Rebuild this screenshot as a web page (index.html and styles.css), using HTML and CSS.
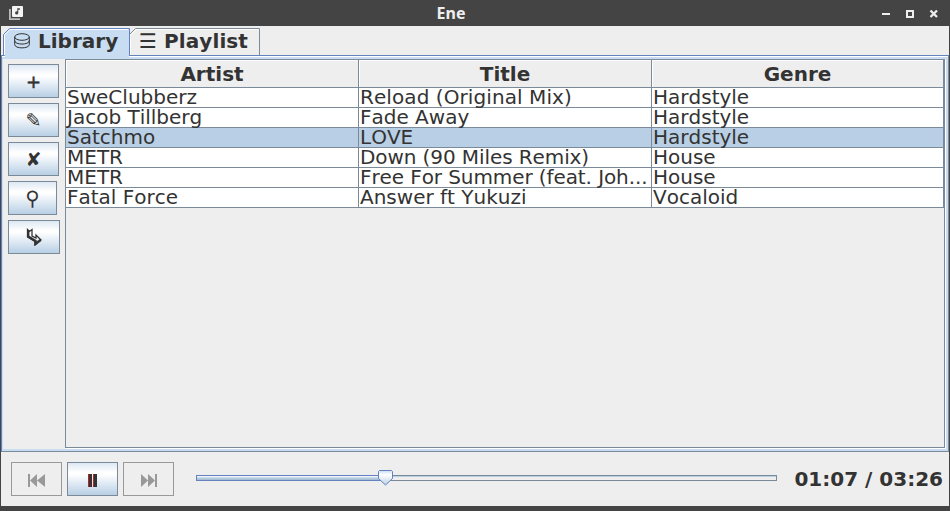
FILE: index.html
```html
<!DOCTYPE html>
<html lang="en">
<head>
<meta charset="utf-8">
<title>Ene</title>
<link rel="stylesheet" href="styles.css">
</head>
<body>
<div class="window">
  <header class="titlebar">
    <svg class="app-icon" width="14" height="14" viewBox="0 0 14 14"><path d="M0 3h1.800v9.200H11V14H0z" fill="#bbb"/><rect x="3" width="11" height="11" rx="1" fill="#f4f4f4"/><path d="M8.300 2.200h2.600v1.600H9.300V7a1.600 1.600 0 1 1-1-1.500z" fill="#444"/></svg>
    <span class="window-title">Ene</span>
    <svg class="window-controls" width="57" height="9" viewBox="0 0 57 9"><path d="M0 4h8v2H0z" fill="#eee"/><path d="M25 2h6v6h-6z" fill="none" stroke="#eee" stroke-width="2"/><path d="M48.500 1.500l6.500 6.500M55 1.500L48.500 8" stroke="#eee" stroke-width="2.300"/></svg>
  </header>
  <nav class="tabs">
    <svg class="tab-shapes" width="260" height="30" viewBox="0 0 260 30"><path d="M4 30V28L2 25V7L8 .5h120V30z" fill="#c8ddf2"/><path d="M2.500 28V6.500l6-6h120V28" fill="none" stroke="#6382bf"/><path d="M3.500 27V7l5.500-5.500h118" fill="none" stroke="#fff"/><path d="M129 6l5.500-5.500h124V27" fill="none" stroke="#7a8a99"/><path d="M129.500 27V7l5.500-5.500h123" fill="none" stroke="#fff"/></svg>
    <div class="tab tab-library"><span class="tab-icon"><svg width="16" height="16" viewBox="0 0 16 16"><path d="M.7 4v7.500c0 4.500 14.600 4.500 14.600 0V4M.7 7.700c0 4.500 14.600 4.500 14.600 0" fill="none" stroke="#333"/><ellipse cx="8" cy="4" rx="7.300" ry="3.300" fill="none" stroke="#333"/></svg></span>Library</div>
    <div class="tab tab-playlist"><span class="tab-icon">☰</span>Playlist</div>
  </nav>
  <main class="content">
    <aside class="tools">
      <button class="btn btn-add">+</button>
      <button class="btn">✎</button>
      <button class="btn">✘</button>
      <button class="btn btn-search">⚲</button>
      <button class="btn btn-import"><svg width="16" height="18" viewBox="0 0 16 18"><path d="M1.500 1.500l2 2 2.500-2V8l4 2V7l5 5-6 4.500v-3L1.500 9z" fill="none" stroke="#333" stroke-width="1.300"/><path d="M2.200 2v6.500L9.500 13v3l5-4" fill="none" stroke="#333" stroke-width="2.400"/></svg></button>
    </aside>
    <section class="scroll">
      <table>
        <colgroup><col class="col-wide"><col class="col-wide"><col></colgroup>
        <thead><tr><th>Artist</th><th>Title</th><th>Genre</th></tr></thead>
        <tbody>
          <tr><td>SweClubberz</td><td class="loose">Reload (Original Mix)</td><td>Hardstyle</td></tr>
          <tr><td>Jacob Tillberg</td><td>Fade Away</td><td>Hardstyle</td></tr>
          <tr class="selected"><td>Satchmo</td><td>LOVE</td><td>Hardstyle</td></tr>
          <tr><td>METR</td><td class="tight">Down (90 Miles Remix)</td><td>House</td></tr>
          <tr><td>METR</td><td class="tight">Free For Summer (feat. Joh...</td><td>House</td></tr>
          <tr><td>Fatal Force</td><td>Answer ft Yukuzi</td><td>Vocaloid</td></tr>
        </tbody>
      </table>
    </section>
  </main>
  <footer class="player">
    <button class="btn" disabled><svg width="17" height="13" viewBox="0 0 17 13"><path d="M0 0h2v13H0zM9 0v13L2 6.500zM17 0v13L9 6.500z" fill="#999"/></svg></button>
    <button class="btn"><svg width="9" height="13" viewBox="0 0 9 13"><path d="M0 0h4v13H0zM5 0h4v13H5z" fill="#333"/><path d="M0 0h1v13H0zM5 0h1v13H5z" fill="#b22"/></svg></button>
    <button class="btn" disabled><svg width="17" height="13" viewBox="0 0 17 13"><path d="M1 0l7 6.500L1 13zM8 0l7 6.500L8 13zM15 0h2v13h-2z" fill="#999"/></svg></button>
    <div class="slider"><div class="filled"></div><svg class="thumb" width="15" height="16" viewBox="0 0 15 16"><defs><linearGradient id="thumb-fill" x2="0" y2="1"><stop stop-color="#c8ddf2"/><stop offset=".3" stop-color="#fff"/><stop offset="1" stop-color="#b8cfe5"/></linearGradient></defs><path d="M1.500 .5h12l1 1v7l-7 6.500-7-6.500v-7z" fill="url(#thumb-fill)" stroke="#6382bf"/></svg></div>
    <output class="time">01:07 / 03:26</output>
  </footer>
</div>
</body>
</html>
```

FILE: styles.css
```css
* { box-sizing: border-box; }
body { margin: 0; font-family: "DejaVu Sans", sans-serif; font-size: 20px; font-kerning: none; color: #333; overflow: hidden; }
.window { width: 950px; height: 511px; display: flex; flex-direction: column; background: #eee; border: solid #444; border-width: 0 1px 5px; }
.titlebar { height: 26px; flex: none; background: #444; display: flex; align-items: center; justify-content: space-between; padding: 0 10px 0 8px; }
.app-icon { margin-top: -1px; }
.window-title { color: #eee; font: bold 16px "Noto Sans", sans-serif; margin: -1px 3px 0 0; }
.tabs { height: 29px; padding: 2px 0 0 3px; flex: none; display: flex; position: relative; font-weight: bold; line-height: 26px; }
.tab-shapes { position: absolute; left: 0; top: 2px; z-index: 1; }
.tab { position: relative; z-index: 2; display: flex; white-space: pre; }
.tab-icon { width: 24px; font-weight: normal; }
.tab-icon svg { display: block; margin-top: 5px; }
.tab-library { width: 127px; padding-left: 10px; }
.tab-playlist { width: 130px; padding-left: 8px; letter-spacing: .1px; }
.tab-playlist .tab-icon { width: 25px; }
.content { height: 397px; flex: none; display: flex; border: 1px solid #6382bf; border-right-color: #7a8a99; border-bottom-color: #7a8a99; box-shadow: inset 0 1px #fff, inset 1px 3px #c8ddf2, inset -2px -2px #c8ddf2; padding: 3px; }
.tools { width: 60px; padding: 5px 0 0 3px; display: flex; flex-direction: column; gap: 5px; flex: none; }
.btn { width: 51px; height: 34px; padding: 0; font: 19px "DejaVu Sans", sans-serif; color: #333; display: flex; align-items: center; justify-content: center; border: 1px solid #7a8a99; background: linear-gradient(#dde8f3, #fff 30%, #fff 35%, #b8cfe5); }
.btn:disabled { background: #eee; border-color: #999; }
.btn-add { font-size: 18px; -webkit-text-stroke: .5px #333; }
.btn-search { width: 49px; font-size: 20px; }
.btn-import { width: 52px; }
.scroll { flex: 1; border: 1px solid #7a8a99; box-shadow: 1px 1px #fff; }
table { width: 878px; border-collapse: separate; border-spacing: 0; table-layout: fixed; }
.col-wide { width: 293px; }
th { height: 28px; padding: 0; line-height: 26px; border: solid #7a8a99; border-width: 0 1px 1px 0; box-shadow: inset 1px 1px #fff; }
td { height: 20px; padding: 0 0 0 1px; line-height: 19px; background: #fff; border: solid #7a8a99; border-width: 0 1px 1px 0; white-space: nowrap; }
.loose { letter-spacing: .08px; }
.tight { letter-spacing: -.09px; }
.selected td { background: #b8cfe5; }
.player { flex: 1; display: flex; align-items: center; padding: 0 6px 0 10px; }
.player .btn { margin-right: 5px; padding-top: 2px; }
.slider { width: 581px; height: 6px; margin: -2px 0 0 17px; border: 1px solid #7a8a99; box-shadow: inset 0 1px #b8cfe5; position: relative; }
.filled { width: 188px; height: 6px; margin: -1px; border: 1px solid #6382bf; background: linear-gradient(#fff, #b8cfe5 50%, #a3b8cc); }
.thumb { position: absolute; left: 181px; top: -6px; }
.time { margin-left: auto; font-weight: bold; white-space: nowrap; }
```
